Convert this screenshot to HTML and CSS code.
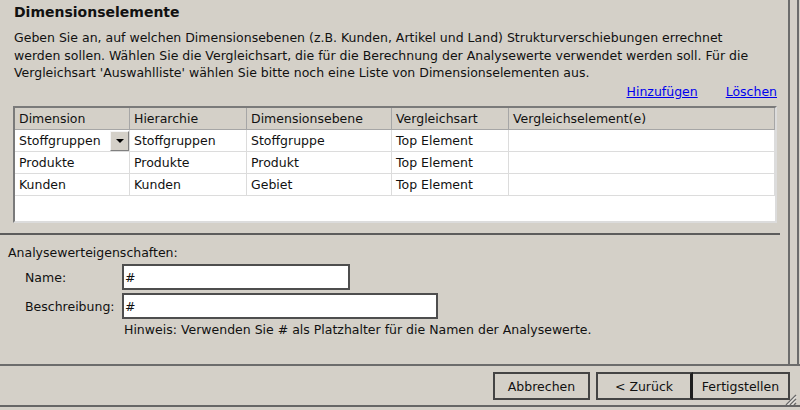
FILE: index.html
```html
<!DOCTYPE html>
<html>
  <head>
    <meta charset="utf-8">
    <title>Dimensionselemente</title>
    <link rel="stylesheet" href="styles.css">
  </head>
  <body>
    <div class="window">
      <div class="upper">
        <div class="panel">
          <h1 class="title">Dimensionselemente</h1>
          <p class="intro">Geben Sie an, auf welchen Dimensionsebenen (z.B. Kunden, Artikel und Land) Strukturverschiebungen errechnet<br>werden sollen. Wählen Sie die Vergleichsart, die für die Berechnung der Analysewerte verwendet werden soll. Für die<br>Vergleichsart 'Auswahlliste' wählen Sie bitte noch eine Liste von Dimensionselementen aus.</p>

          <div class="links">
            <a href="#">Hinzufügen</a>
            <a href="#">Löschen</a>
          </div>

          <div class="grid">
            <table>
              <colgroup>
                <col class="c1"><col class="c2"><col class="c3"><col class="c4"><col class="c5">
              </colgroup>
              <thead>
                <tr>
                  <th>Dimension</th>
                  <th>Hierarchie</th>
                  <th>Dimensionsebene</th>
                  <th>Vergleichsart</th>
                  <th>Vergleichselement(e)</th>
                </tr>
              </thead>
              <tbody>
                <tr>
                  <td class="combo-cell">
                    <div class="combo"><span>Stoffgruppen</span><span class="dd-btn"><span class="arrow"></span></span></div>
                  </td>
                  <td>Stoffgruppen</td>
                  <td>Stoffgruppe</td>
                  <td>Top Element</td>
                  <td></td>
                </tr>
                <tr>
                  <td>Produkte</td>
                  <td>Produkte</td>
                  <td>Produkt</td>
                  <td>Top Element</td>
                  <td></td>
                </tr>
                <tr>
                  <td>Kunden</td>
                  <td>Kunden</td>
                  <td>Gebiet</td>
                  <td>Top Element</td>
                  <td></td>
                </tr>
              </tbody>
            </table>
          </div>

          <div class="divider"></div>

          <div class="props">
            <div class="props-title">Analysewerteigenschaften:</div>
            <div class="field">
              <label for="name">Name:</label>
              <input id="name" class="input input-short" type="text" value="#">
            </div>
            <div class="field">
              <label for="desc">Beschreibung:</label>
              <input id="desc" class="input input-long" type="text" value="#">
            </div>
            <div class="hint">Hinweis: Verwenden Sie # als Platzhalter für die Namen der Analysewerte.</div>
          </div>
        </div>
        <div class="frame-edge"></div>
      </div>

      <div class="footer">
        <button class="btn">Abbrechen</button>
        <button class="btn btn-back">&lt; Zurück</button>
        <button class="btn btn-finish">Fertigstellen</button>
      </div>

      <!-- size grip -->
      <svg class="grip" width="14" height="14" viewBox="0 0 14 14">
        <path d="M13 3 L3 13 M13 7 L7 13 M13 11 L11 13" stroke="#6a6a6a" stroke-width="1.4" fill="none"/>
        <path d="M13 4.5 L4.5 13 M13 8.5 L8.5 13" stroke="#ffffff" stroke-width="0.8" fill="none"/>
      </svg>
    </div>
  </body>
</html>
```

FILE: styles.css
```css
html, body {
  margin: 0;
  padding: 0;
}

body {
  background: #d4d0c8;
  font-family: "DejaVu Sans", "Liberation Sans", sans-serif;
  font-size: 12.5px;
  color: #111;
}

.window {
  position: relative;
  width: 800px;
  height: 410px;
  overflow: hidden;
}

.upper {
  display: flex;
  height: 366px;
  box-sizing: border-box;
  border-bottom: 2px solid #6c6c6c;
}

.panel {
  width: 790px;
  box-sizing: border-box;
  border-right: 2px solid #6c6c6c;
  padding: 2px 11px 0 8px;
}

.frame-edge {
  width: 7px;
  border-right: 2px solid #6c6c6c;
}

.title {
  margin: 0 0 0 6px;
  font-size: 14px;
  font-weight: bold;
  line-height: 21px;
}

.intro {
  margin: 6px 0 0 6px;
  line-height: 17.5px;
}

.links {
  display: flex;
  justify-content: flex-end;
  gap: 28px;
  margin-top: 1.5px;
  line-height: 17px;
}

.links a {
  color: #0000ee;
  text-decoration: underline;
}

/* grid */
.grid {
  margin: 6px 0 0 5px;
  height: 117px;
  box-sizing: border-box;
  background: #fff;
  border-top: 2px solid #7a7a7a;
  border-left: 2px solid #7a7a7a;
  border-right: 2px solid #dcdcdc;
  border-bottom: 2px solid #dcdcdc;
  overflow: hidden;
}

.grid table {
  border-collapse: separate;
  border-spacing: 0;
  table-layout: fixed;
  width: 760px;
}

col.c1 { width: 115px; }
col.c2 { width: 117px; }
col.c3 { width: 145px; }
col.c4 { width: 117px; }
col.c5 { width: 266px; }

.grid th {
  height: 21px;
  padding: 0 4px;
  background: #d4d0c8;
  border-right: 1px solid #a6a6a6;
  border-bottom: 1px solid #a6a6a6;
  font-weight: normal;
  text-align: left;
  white-space: nowrap;
}

.grid td {
  height: 21px;
  padding: 0 4px;
  border-right: 1px solid #dcdcdc;
  border-bottom: 1px solid #dcdcdc;
  white-space: nowrap;
}

.grid td.combo-cell {
  padding-right: 0;
}

.combo {
  display: flex;
  align-items: center;
  justify-content: space-between;
}

.dd-btn {
  display: flex;
  align-items: center;
  justify-content: center;
  width: 19px;
  height: 20px;
  box-sizing: border-box;
  background: #d4d0c8;
  border-top: 1px solid #f4f4f4;
  border-left: 1px solid #f4f4f4;
  border-right: 1px solid #808080;
  border-bottom: 1px solid #808080;
}

.arrow {
  width: 0;
  height: 0;
  border-left: 4px solid transparent;
  border-right: 4px solid transparent;
  border-top: 4px solid #000;
}

.divider {
  margin: 10px 0 0 -8px;
  width: 780px;
  height: 2px;
  background: #5c5c5c;
}

/* properties */
.props-title {
  margin-top: 9px;
  line-height: 17px;
}

.field {
  display: flex;
  align-items: center;
  margin-top: 3px;
  padding-left: 17px;
}

.field label {
  width: 97px;
}

.input {
  height: 26px;
  box-sizing: border-box;
  margin: 0;
  padding: 0 1px;
  border: 2px solid #4e4e4e;
  background: #fff;
  font-family: "DejaVu Sans", "Liberation Sans", sans-serif;
  font-size: 12.5px;
  color: #111;
  outline: none;
}

.input-short { width: 228px; }
.input-long { width: 316px; }

.hint {
  margin: 2px 0 0 116px;
  line-height: 17px;
}

/* buttons */
.footer {
  display: flex;
  justify-content: flex-end;
  height: 41px;
  box-sizing: border-box;
  padding: 6px 10px 0 0;
  border-bottom: 2px solid #666;
}

.btn {
  width: 97px;
  height: 28px;
  margin: 0;
  padding: 0;
  background: #d4d0c8;
  border: 2px solid #444;
  font-family: "DejaVu Sans", "Liberation Sans", sans-serif;
  font-size: 12.5px;
  color: #111;
}

.btn-back {
  margin-left: 6px;
  border-right: 3px solid #1e1e1e;
}

.btn-finish {
  border-left: 0;
}

.grip {
  position: absolute;
  right: 3px;
  bottom: 4px;
}
```
